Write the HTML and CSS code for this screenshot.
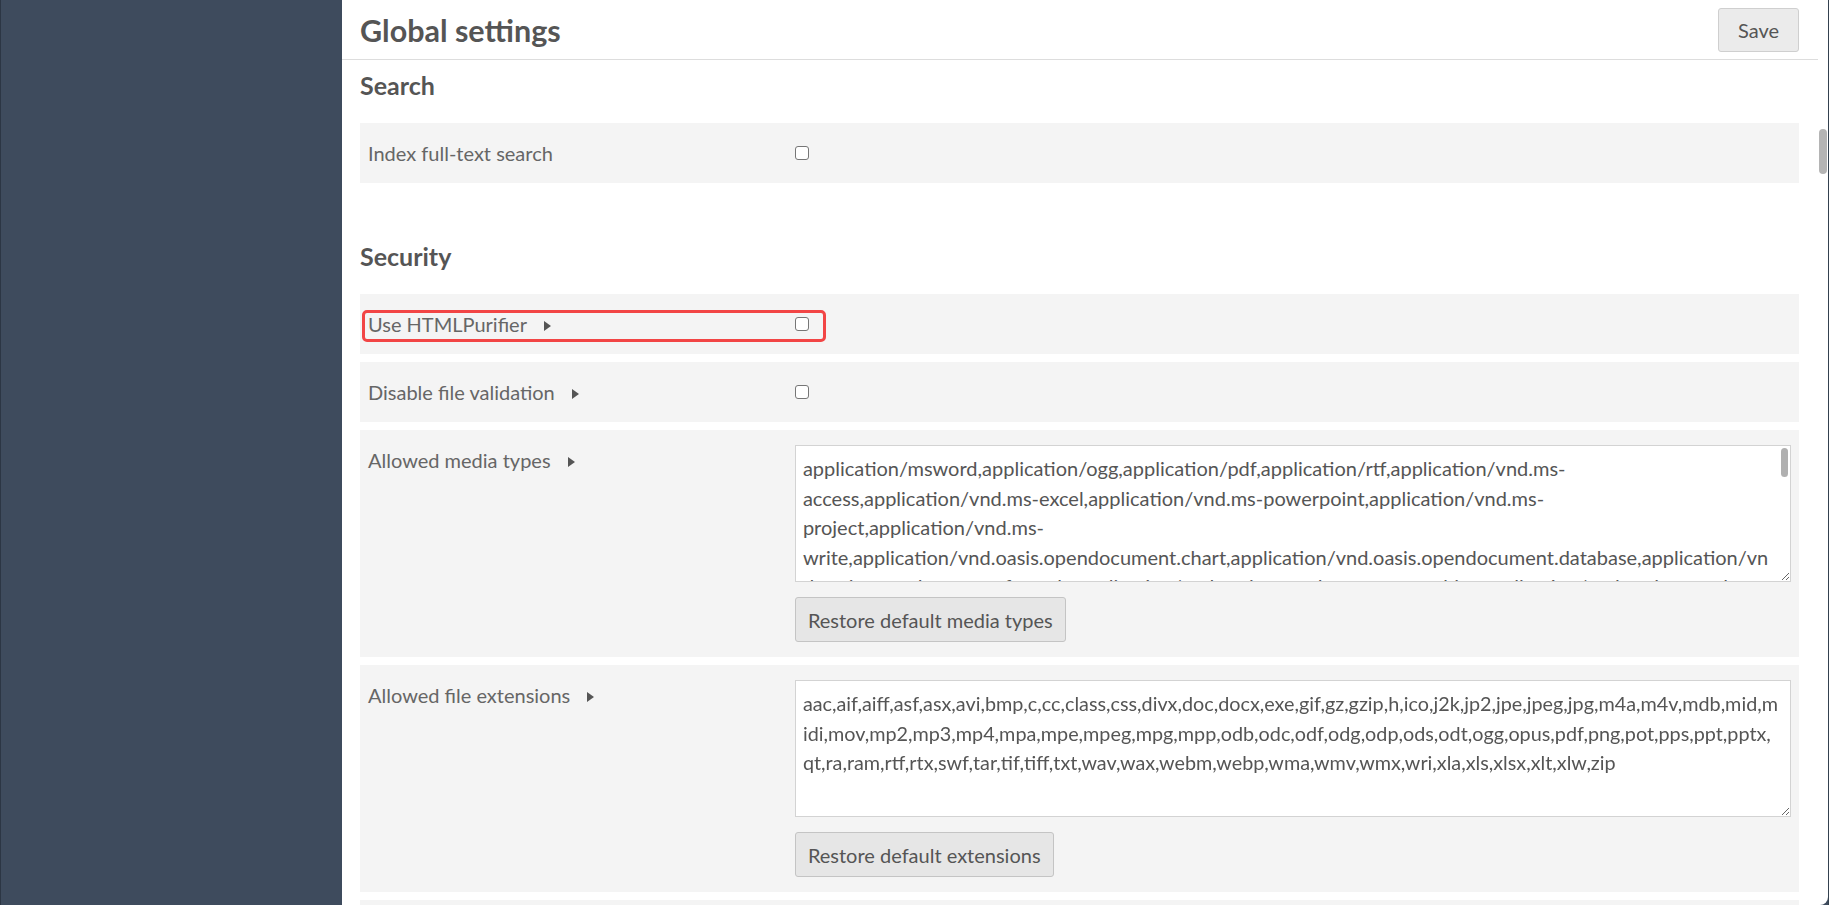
FILE: index.html
```html
<!DOCTYPE html>
<html lang="en">
<head>
    <meta charset="UTF-8">
    <meta name="viewport" content="width=device-width, initial-scale=1.0">
    <title>Global settings</title>
    <link rel="stylesheet" href="styles.css">
</head>
<body>

    <div class="app">
        <aside class="sidebar"></aside>

        <main class="panel">
            <div class="page-header">
                <h1>Global settings</h1>
                <button type="button" class="btn btn-save">Save</button>
            </div>

            <div class="page-content">
                <section class="settings-group">
                    <h2>Search</h2>
                    <div class="setting-row">
                        <div class="setting-label">
                            <label for="index_fulltext">Index full-text search</label>
                        </div>
                        <div class="setting-input">
                            <input type="checkbox" id="index_fulltext" class="check">
                        </div>
                    </div>
                </section>

                <section class="settings-group">
                    <h2>Security</h2>
                    <div class="setting-row">
                        <div class="setting-label">
                            <label for="use_htmlpurifier">Use HTMLPurifier</label>
                            <span class="expand"></span>
                        </div>
                        <div class="setting-input">
                            <input type="checkbox" id="use_htmlpurifier" class="check">
                        </div>
                        <div class="highlight"></div>
                    </div>

                    <div class="setting-row">
                        <div class="setting-label">
                            <label for="disable_validation">Disable file validation</label>
                            <span class="expand"></span>
                        </div>
                        <div class="setting-input">
                            <input type="checkbox" id="disable_validation" class="check">
                        </div>
                    </div>

                    <div class="setting-row">
                        <div class="setting-label">
                            <label for="media_types">Allowed media types</label>
                            <span class="expand"></span>
                        </div>
                        <div class="setting-input">
                            <div class="list-wrap">
                                <textarea id="media_types" class="list-box list-box-scroll">application/msword,application/ogg,application/pdf,application/rtf,application/vnd.ms-access,application/vnd.ms-excel,application/vnd.ms-powerpoint,application/vnd.ms-project,application/vnd.ms-write,application/vnd.oasis.opendocument.chart,application/vnd.oasis.opendocument.database,application/vnd.oasis.opendocument.formula,application/vnd.oasis.opendocument.graphics,application/vnd.oasis.opendocument.presentation,application/vnd.oasis.opendocument.spreadsheet,application/vnd.oasis.opendocument.text,application/vnd.openxmlformats-officedocument.wordprocessingml.document,application/vnd.openxmlformats-officedocument.presentationml.presentation,application/vnd.openxmlformats-officedocument.spreadsheetml.sheet,application/x-gzip,application/x-ms-wmp,application/x-msdownload,application/x-shockwave-flash,application/x-tar,application/zip,audio/midi,audio/mp4,audio/mpeg,audio/ogg,audio/x-aac,audio/x-aiff,audio/x-ms-wma,audio/x-ms-wax,audio/x-realaudio,audio/x-wav,image/bmp,image/gif,image/jp2,image/jpeg,image/pjpeg,image/png,image/tiff,image/webp,image/x-icon,text/css,text/plain,text/richtext,video/divx,video/mp4,video/mpeg,video/ogg,video/quicktime,video/webm,video/x-ms-asf,video/x-msvideo,video/x-ms-wmv</textarea>
                                <span class="list-thumb"></span>
                            </div>
                            <button type="button" class="btn">Restore default media types</button>
                        </div>
                    </div>

                    <div class="setting-row">
                        <div class="setting-label">
                            <label for="extensions">Allowed file extensions</label>
                            <span class="expand"></span>
                        </div>
                        <div class="setting-input">
                            <div class="list-wrap">
                                <textarea id="extensions" class="list-box list-box-ext">aac,aif,aiff,asf,asx,avi,bmp,c,cc,class,css,divx,doc,docx,exe,gif,gz,gzip,h,ico,j2k,jp2,jpe,jpeg,jpg,m4a,m4v,mdb,mid,midi,mov,mp2,mp3,mp4,mpa,mpe,mpeg,mpg,mpp,odb,odc,odf,odg,odp,ods,odt,ogg,opus,pdf,png,pot,pps,ppt,pptx,qt,ra,ram,rtf,rtx,swf,tar,tif,tiff,txt,wav,wax,webm,webp,wma,wmv,wmx,wri,xla,xls,xlsx,xlt,xlw,zip</textarea>
                            </div>
                            <button type="button" class="btn">Restore default extensions</button>
                        </div>
                    </div>

                    <!-- next setting, below the fold -->
                    <div class="setting-row setting-row-next"></div>
                </section>
            </div>
        </main>

        <div class="scroll-track">
            <div class="scroll-thumb"></div>
        </div>
    </div>

</body>
</html>
```

FILE: styles.css
```css
html, body {
    margin: 0;
    height: 100%;
}

body {
    font-family: Lato, "Open Sans", sans-serif;
    background-color: #3e4b5d;
    color: #555;
    overflow: hidden;
}

.app {
    display: flex;
    height: 100vh;
    border-left: 1px solid #2c3644;
    border-right: 1px solid #34414f;
}

.sidebar {
    width: 341px;
    flex-shrink: 0;
    background-color: #3e4b5d;
}

.panel {
    flex: 1;
    display: flex;
    flex-direction: column;
    background-color: #fff;
    overflow: hidden;
}

.scroll-track {
    width: 10px;
    flex-shrink: 0;
    background-color: #fff;
    border-bottom-right-radius: 8px;
}

.scroll-thumb {
    width: 8px;
    height: 45px;
    margin: 129px 0 0 1px;
    background-color: #b4b4b4;
    border-radius: 4px;
}

.page-header {
    display: flex;
    align-items: center;
    justify-content: space-between;
    height: 59px;
    padding: 0 19px 0 18px;
    border-bottom: 1px solid #ddd;
    flex-shrink: 0;
}

.page-header h1 {
    margin: 0;
    font-size: 30.5px;
    font-weight: bold;
    color: #555;
}

.page-content {
    padding: 0 19px 0 18px;
}

.settings-group {
    padding-top: 10px;
}

.settings-group + .settings-group {
    margin-top: 48px;
}

.settings-group h2 {
    margin: 0 0 23px;
    font-size: 25px;
    font-weight: bold;
    color: #555;
}

.setting-row {
    position: relative;
    display: grid;
    grid-template-columns: 30% 70%;
    padding: 15px 8px;
    margin-bottom: 8px;
    background-color: #f4f4f4;
}

.setting-row-next {
    height: 60px;
    box-sizing: border-box;
}

.setting-label {
    font-size: 20px;
    line-height: 30px;
    color: #666;
}

.expand {
    display: inline-block;
    margin-left: 12px;
    border-left: 7px solid #555;
    border-top: 5px solid transparent;
    border-bottom: 5px solid transparent;
    vertical-align: 1px;
}

.setting-input {
    display: flex;
    flex-direction: column;
    align-items: flex-start;
}

.check {
    appearance: none;
    width: 14px;
    height: 14px;
    margin: 8px 0;
    border: 1px solid #767676;
    border-radius: 3px;
    background-color: #fff;
}

.highlight {
    position: absolute;
    left: 2px;
    top: 16px;
    width: 458px;
    height: 26px;
    border: 3px solid #f24545;
    border-radius: 5px;
}

.list-wrap {
    position: relative;
    width: 100%;
    margin-bottom: 15px;
}

.list-box {
    display: block;
    box-sizing: border-box;
    width: 100%;
    height: 137px;
    margin: 0;
    padding: 8px 8px 8px 7px;
    border: 1px solid #d3d3d3;
    border-radius: 0;
    font-family: Lato, "Open Sans", sans-serif;
    font-size: 20px;
    line-height: 29.5px;
    color: #555;
    background-color: #fff;
}

/* room for the scrollbar of the long list */
.list-box-scroll {
    padding-right: 20px;
}

.list-box-ext {
    padding-right: 10px;
    font-size: 19.8px;
}

.list-thumb {
    position: absolute;
    top: 3px;
    right: 3px;
    width: 7px;
    height: 29px;
    background-color: #b0b0b0;
    border-radius: 4px;
}

.btn {
    height: 45px;
    padding: 0 12px;
    font-family: Lato, "Open Sans", sans-serif;
    font-size: 20px;
    color: #555;
    background-color: #e6e6e6;
    border: 1px solid #c4c4c4;
    border-radius: 3px;
    cursor: pointer;
}

.btn-save {
    width: 81px;
    height: 44px;
    padding: 0;
    background-color: #ebebeb;
    border-color: #cfcfcf;
}
```
